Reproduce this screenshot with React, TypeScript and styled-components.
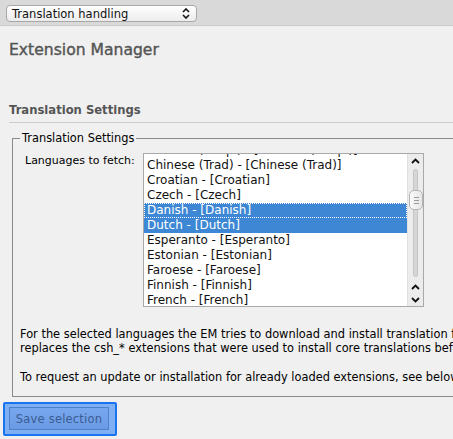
import React from "react";
import styled, { createGlobalStyle } from "styled-components";

const Global = createGlobalStyle`
  html, body { margin: 0; padding: 0; }
  body {
    background: #f0f0f0;
    font-family: "DejaVu Sans", Verdana, sans-serif;
    font-size: 11px;
    color: #000;
    overflow: hidden;
    width: 453px;
    height: 439px;
  }
`;

const Page = styled.div`
  width: 453px;
  height: 439px;
  overflow: hidden;
  display: flex;
  flex-direction: column;
`;

const TopBar = styled.div`
  height: 26px;
  background: #d9d9d9;
  border-bottom: 1px solid #cbcbcb;
  display: flex;
  align-items: flex-start;
  padding: 5px 0 0 6px;
  box-sizing: border-box;
`;

const FakeSelect = styled.div`
  width: 191px;
  height: 17px;
  box-sizing: border-box;
  border: 1px solid #a8a8a8;
  border-radius: 4px;
  background: linear-gradient(#ffffff, #ececec);
  display: flex;
  align-items: center;
  justify-content: space-between;
  padding: 0 6px 0 5px;
  font-size: 11.5px;
  color: #111;
`;

const Content = styled.div`
  padding: 0 0 0 9px;
  display: flex;
  flex-direction: column;
`;

const Title = styled.h1`
  margin: 15px 0 0 0;
  font-size: 15.6px;
  line-height: 19px;
  font-weight: normal;
  color: #555;
  -webkit-text-stroke: 0.4px #555;
`;

const SubTitle = styled.h2`
  margin: 43px 0 0 0;
  font-size: 11.6px;
  line-height: 15px;
  font-weight: bold;
  color: #555;
  padding-bottom: 4px;
  border-bottom: 1px solid #cccccc;
`;

const Fieldset = styled.fieldset`
  margin: 9px 0 0 3px;
  width: 640px;
  box-sizing: border-box;
  border: 1px solid #8a8a8a;
  padding: 0 7px 12px 7px;
`;

const Legend = styled.legend`
  padding: 0 2px;
  margin-left: 0;
  font-size: 11.4px;
  line-height: 13px;
`;

const FieldRow = styled.div`
  display: flex;
  align-items: flex-start;
  margin-top: 8px;
`;

const Label = styled.div`
  width: 123px;
  flex-shrink: 0;
  padding-left: 5px;
  box-sizing: border-box;
  padding-top: 1px;
  line-height: 14px;
  font-size: 11px;
  white-space: nowrap;
`;

const ListBox = styled.div`
  width: 281px;
  height: 154px;
  flex-shrink: 0;
  box-sizing: border-box;
  border: 1px solid #a9a9a9;
  background: #fff;
  display: flex;
  overflow: hidden;
`;

const Options = styled.div`
  flex: 1;
  overflow: hidden;
`;

const OptionsInner = styled.div`
  margin-top: -11px;
`;

const Option = styled.div<{ $sel?: boolean; $focus?: boolean }>`
  height: 15px;
  line-height: 15px;
  padding-left: 3px;
  font-size: 12px;
  white-space: nowrap;
  box-sizing: border-box;
  background: ${(p) => (p.$sel ? "#3d87d4" : "transparent")};
  color: ${(p) => (p.$sel ? "#fff" : "#111")};
  outline: ${(p) => (p.$focus ? "1px dotted #ffffff" : "none")};
  outline-offset: -1px;
`;

const ScrollBar = styled.div`
  width: 15px;
  background: #ececec;
  border-left: 1px solid #e0e0e0;
  display: flex;
  flex-direction: column;
  align-items: center;
`;

const Arrow = styled.div`
  height: 13px;
  display: flex;
  align-items: center;
  justify-content: center;
`;

const Track = styled.div`
  flex: 1;
  width: 5px;
  margin: 2px 0 3px 0;
  border-radius: 3px;
  background: #d6d6d6;
  border: 1px solid #c4c4c4;
  box-sizing: border-box;
  position: relative;
`;

const Thumb = styled.div`
  position: absolute;
  left: -5px;
  top: 20px;
  width: 14px;
  height: 20px;
  box-sizing: border-box;
  border: 1px solid #b5b5b5;
  border-radius: 5px;
  background: linear-gradient(90deg, #fafafa, #e6e6e6);
  display: flex;
  flex-direction: column;
  align-items: center;
  justify-content: center;
  gap: 2px;
`;

const Grip = styled.div`
  width: 5px;
  height: 1px;
  background: #9a9a9a;
`;

const Para = styled.p`
  margin: 20px 0 0 0;
  line-height: 14px;
  white-space: nowrap;
  font-size: 11.4px;
  & + & { margin-top: 15px; }
`;

const ButtonRing = styled.div`
  margin: 5px 0 0 -6px;
  align-self: flex-start;
  padding: 3px 6px 4px 4px;
  border: 2px solid #1a74f0;
  border-radius: 2px;
  background: #7fb0f4;
`;

const Button = styled.button`
  display: block;
  font-family: "DejaVu Sans", Verdana, sans-serif;
  font-size: 11.5px;
  height: 23px;
  width: 100px;
  border: 1px solid #4f80cc;
  background: linear-gradient(#77a8ef, #6a9ae4);
  color: #3b5c93;
  padding: 0;
  letter-spacing: 0.2px;
`;

const Chevron = ({ up }: { up?: boolean }) => (
  <svg width="9" height="6" viewBox="0 0 9 6">
    <path
      d={up ? "M1 5 L4.5 1.5 L8 5" : "M1 1 L4.5 4.5 L8 1"}
      fill="none"
      stroke="#111"
      strokeWidth="1.8"
    />
  </svg>
);

const langs = [
  "Chinese (Simpl) - [Chinese (Simpl)]",
  "Chinese (Trad) - [Chinese (Trad)]",
  "Croatian - [Croatian]",
  "Czech - [Czech]",
  "Danish - [Danish]",
  "Dutch - [Dutch]",
  "Esperanto - [Esperanto]",
  "Estonian - [Estonian]",
  "Faroese - [Faroese]",
  "Finnish - [Finnish]",
  "French - [French]",
];

export default function App() {
  return (
    <Page>
      <Global />
      <TopBar>
        <FakeSelect>
          <span>Translation handling</span>
          <svg width="8" height="11" viewBox="0 0 8 11">
            <path d="M1 4 L4 1 L7 4" fill="none" stroke="#111" strokeWidth="1.6" />
            <path d="M1 7 L4 10 L7 7" fill="none" stroke="#111" strokeWidth="1.6" />
          </svg>
        </FakeSelect>
      </TopBar>
      <Content>
        <Title>Extension Manager</Title>
        <SubTitle>Translation Settings</SubTitle>
        <Fieldset>
          <Legend>Translation Settings</Legend>
          <FieldRow>
            <Label>Languages to fetch:</Label>
            <ListBox>
              <Options>
                <OptionsInner>
                  {langs.map((l) => (
                    <Option
                      key={l}
                      $sel={l.startsWith("Danish") || l.startsWith("Dutch")}
                      $focus={l.startsWith("Danish")}
                    >
                      {l}
                    </Option>
                  ))}
                </OptionsInner>
              </Options>
              <ScrollBar>
                <Arrow>
                  <Chevron up />
                </Arrow>
                <Track>
                  <Thumb>
                    <Grip />
                    <Grip />
                    <Grip />
                  </Thumb>
                </Track>
                <Arrow>
                  <Chevron up />
                </Arrow>
                <Arrow>
                  <Chevron />
                </Arrow>
              </ScrollBar>
            </ListBox>
          </FieldRow>
          <Para>
            For the selected languages the EM tries to download and install translation files if available. It
            <br />
            replaces the csh_* extensions that were used to install core translations before.
          </Para>
          <Para>To request an update or installation for already loaded extensions, see below.</Para>
        </Fieldset>
        <ButtonRing>
          <Button>Save selection</Button>
        </ButtonRing>
      </Content>
    </Page>
  );
}
